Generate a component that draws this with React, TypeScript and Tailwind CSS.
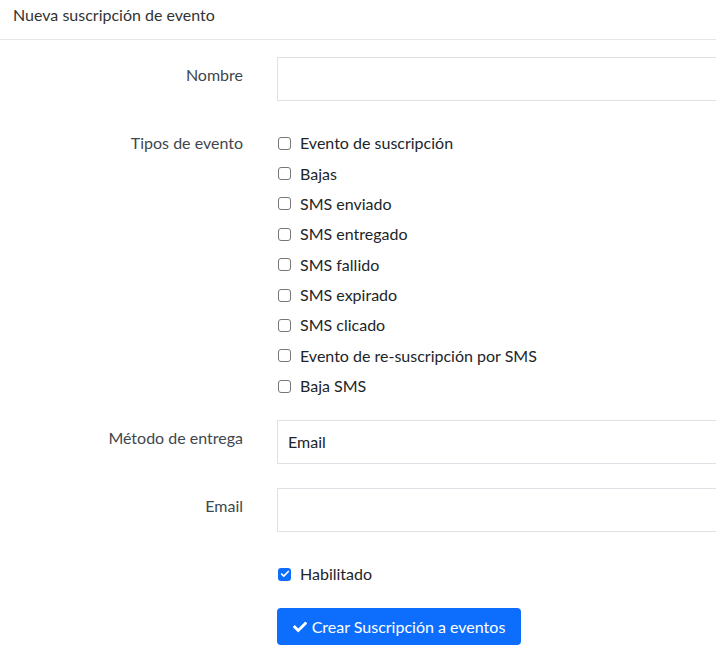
import { Check } from "lucide-react"

const eventTypes = [
  "Evento de suscripción",
  "Bajas",
  "SMS enviado",
  "SMS entregado",
  "SMS fallido",
  "SMS expirado",
  "SMS clicado",
  "Evento de re-suscripción por SMS",
  "Baja SMS",
]

function Box({ checked = false }: { checked?: boolean }) {
  if (checked) {
    return (
      <span className="flex h-[13px] w-[13px] shrink-0 items-center justify-center rounded-[3px] bg-[#0d6efd]">
        <Check className="h-[10px] w-[10px] text-white" strokeWidth={4} />
      </span>
    )
  }
  return <span className="h-[13px] w-[13px] shrink-0 rounded-[3px] border border-[#767676] bg-white" />
}

function FaCheck() {
  return (
    <svg viewBox="0 0 512 512" className="h-[14px] w-[14px] fill-current">
      <path d="M173.9 439.4l-166.4-166.4c-10-10-10-26.2 0-36.2l36.2-36.2c10-10 26.2-10 36.2 0L192 312.7 432.1 72.6c10-10 26.2-10 36.2 0l36.2 36.2c10 10 10 26.2 0 36.2l-294.4 294.4c-10 10-26.2 10-36.2 0z" />
    </svg>
  )
}

function Row({ label, children, labelClass = "pt-[7px]" }: { label?: string; children: React.ReactNode; labelClass?: string }) {
  return (
    <div className="flex">
      <div className={`w-[243px] shrink-0 text-right text-[#41474d] ${labelClass}`}>{label}</div>
      <div className="ml-[34px] flex-1">{children}</div>
    </div>
  )
}

export default function App() {
  return (
    <div className="h-[671px] w-[716px] overflow-hidden bg-white text-[16px] leading-[22px] text-[#212529] [font-family:Lato,sans-serif]">
      <div className="h-[40px] border-b border-[#e6e6e6] pl-[13px] pt-[4px] text-[16px] text-[#333]">
        Nueva suscripción de evento
      </div>

      <div className="pt-[17px]">
        <Row label="Nombre">
          <div className="h-[44px] w-[460px] border border-[#dee2e6]" />
        </Row>

        <div className="mt-[27px]">
          <Row label="Tipos de evento" labelClass="pt-[4px]">
            <div className="flex flex-col">
              {eventTypes.map((t) => (
                <label key={t} className="flex h-[30.375px] items-center gap-[9px] pl-px">
                  <Box />
                  <span>{t}</span>
                </label>
              ))}
            </div>
          </Row>
        </div>

        <div className="mt-[19px]">
          <Row label="Método de entrega">
            <div className="flex h-[44px] w-[460px] items-center border border-[#dee2e6] pl-[10px]">
              Email
            </div>
          </Row>
        </div>

        <div className="mt-[24px]">
          <Row label="Email">
            <div className="h-[44px] w-[460px] border border-[#dee2e6]" />
          </Row>
        </div>

        <div className="mt-[27px]">
          <Row>
            <label className="flex h-[30px] items-center gap-[9px] pl-px">
              <Box checked />
              <span>Habilitado</span>
            </label>
          </Row>
        </div>

        <div className="mt-[19px]">
          <Row>
            <button
              type="button"
              className="flex h-[37px] w-[244px] items-center justify-center gap-[5px] rounded-[4px] bg-[#0d6efd] text-[16px] text-white"
            >
              <FaCheck />
              Crear Suscripción a eventos
            </button>
          </Row>
        </div>
      </div>
    </div>
  )
}
